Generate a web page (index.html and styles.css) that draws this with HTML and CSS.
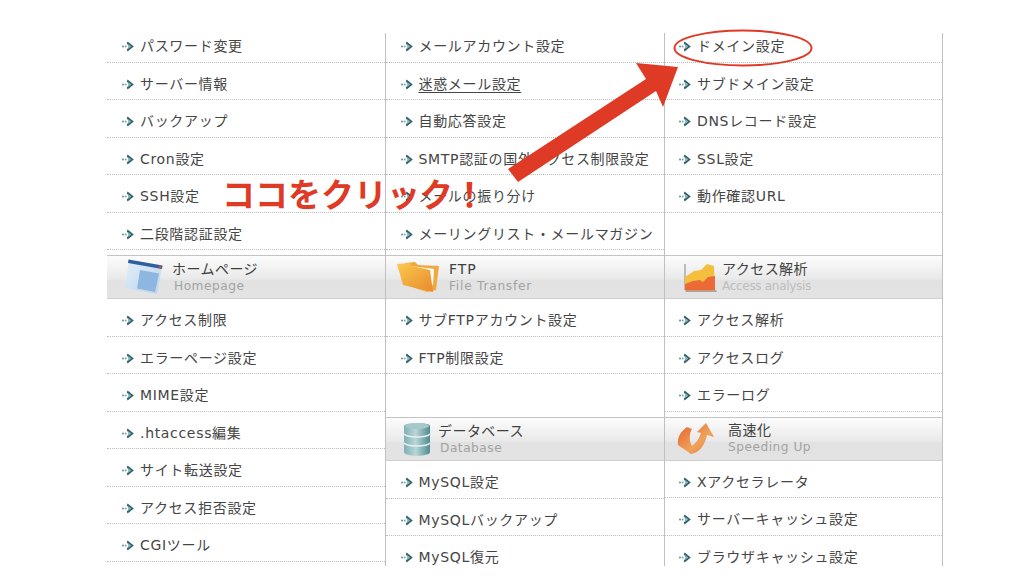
FILE: index.html
```html
<!DOCTYPE html>
<html lang="ja">
<head>
<meta charset="utf-8">
<title>サーバー設定</title>
<link rel="stylesheet" href="styles.css">
</head>
<body>
<svg class="defs" width="0" height="0" aria-hidden="true">
  <symbol id="bullet" viewBox="0 0 12 11">
    <circle cx="1" cy="5.5" r="1" fill="#5f8f96"/>
    <circle cx="3.7" cy="5.5" r="1" fill="#7fa6ac"/>
    <path d="M5.6 .4 11.8 5.5 5.6 10.6 4.8 8.4 7.4 5.5 4.8 2.6Z" fill="#2f5f68"/>
    <path d="M6.2 3 9.4 5.5 6.2 8Z" fill="#86b2b7"/>
  </symbol>
</svg>
<main class="menu">
  <section class="col">
    <div class="row"><svg class="bullet"><use href="#bullet"/></svg>パスワード変更</div>
    <div class="row"><svg class="bullet"><use href="#bullet"/></svg>サーバー情報</div>
    <div class="row"><svg class="bullet"><use href="#bullet"/></svg>バックアップ</div>
    <div class="row"><svg class="bullet"><use href="#bullet"/></svg>Cron設定</div>
    <div class="row"><svg class="bullet"><use href="#bullet"/></svg>SSH設定</div>
    <div class="row"><svg class="bullet"><use href="#bullet"/></svg>二段階認証設定</div>
    <div class="spacer spacer-small"></div>
    <header class="head head-home">
      <svg class="head-icon" width="40" height="36" viewBox="0 0 40 36">
        <defs><linearGradient id="win" x1="0" y1="0" x2="1" y2="1"><stop offset="0" stop-color="#e3eff9"/><stop offset="1" stop-color="#b9d3ec"/></linearGradient></defs>
        <path d="M5 1 38 7 33 35 1 29Z" fill="url(#win)"/>
        <path d="M4.5 .5 38.5 6.5 38 10 4 4Z" fill="#2f5f9f"/>
        <circle cx="36" cy="8" r="1.5" fill="#c8503c"/>
        <path d="M16 11 35 14.5 31 33 13 29.5Z" fill="#8db6e0"/>
      </svg>
      <div class="head-text"><span class="title">ホームページ</span><span class="sub">Homepage</span></div>
    </header>
    <div class="row"><svg class="bullet"><use href="#bullet"/></svg>アクセス制限</div>
    <div class="row"><svg class="bullet"><use href="#bullet"/></svg>エラーページ設定</div>
    <div class="row"><svg class="bullet"><use href="#bullet"/></svg>MIME設定</div>
    <div class="row"><svg class="bullet"><use href="#bullet"/></svg>.htaccess編集</div>
    <div class="row"><svg class="bullet"><use href="#bullet"/></svg>サイト転送設定</div>
    <div class="row"><svg class="bullet"><use href="#bullet"/></svg>アクセス拒否設定</div>
    <div class="row"><svg class="bullet"><use href="#bullet"/></svg>CGIツール</div>
  </section>
  <section class="col col-mid">
    <div class="row"><svg class="bullet"><use href="#bullet"/></svg>メールアカウント設定</div>
    <div class="row"><svg class="bullet"><use href="#bullet"/></svg><span class="link">迷惑メール設定</span></div>
    <div class="row"><svg class="bullet"><use href="#bullet"/></svg>自動応答設定</div>
    <div class="row"><svg class="bullet"><use href="#bullet"/></svg>SMTP認証の国外アクセス制限設定</div>
    <div class="row"><svg class="bullet"><use href="#bullet"/></svg>メールの振り分け</div>
    <div class="row"><svg class="bullet"><use href="#bullet"/></svg>メーリングリスト・メールマガジン</div>
    <div class="spacer spacer-small"></div>
    <header class="head head-ftp">
      <svg class="head-icon" width="44" height="32" viewBox="0 0 44 32">
        <defs><linearGradient id="fold" x1="0" y1="0" x2="1" y2="1"><stop offset="0" stop-color="#fbc94f"/><stop offset="1" stop-color="#e98a2c"/></linearGradient></defs>
        <path d="M8 2 18 1 21 4 42 5 39 29 30 31 9 24Z" fill="#efa93c"/>
        <path d="M13 5 37 8 36 24 14 20Z" fill="#fff"/>
        <path d="M0 3 13 2 15 5 33 9 36 31 6 24Z" fill="url(#fold)"/>
      </svg>
      <div class="head-text"><span class="title title-latin">FTP</span><span class="sub sub-wide">File Transfer</span></div>
    </header>
    <div class="row"><svg class="bullet"><use href="#bullet"/></svg>サブFTPアカウント設定</div>
    <div class="row"><svg class="bullet"><use href="#bullet"/></svg>FTP制限設定</div>
    <div class="spacer spacer-large"></div>
    <header class="head head-db">
      <svg class="head-icon" width="28" height="34" viewBox="0 0 28 34">
        <defs><linearGradient id="cyl" x1="0" y1="0" x2="1" y2="0"><stop offset="0" stop-color="#7fb0b4"/><stop offset=".45" stop-color="#b9d6d6"/><stop offset="1" stop-color="#4f8a92"/></linearGradient></defs>
        <path d="M1 4C1 0 27 0 27 4V30C27 35 1 35 1 30Z" fill="url(#cyl)"/>
        <ellipse cx="14" cy="4" rx="12" ry="3" fill="#a5c9cb"/>
        <path d="M1 12C5 16 23 16 27 12M1 21C5 25 23 25 27 21" fill="none" stroke="#e6f0f0" stroke-width="1.4"/>
      </svg>
      <div class="head-text"><span class="title">データベース</span><span class="sub">Database</span></div>
    </header>
    <div class="row"><svg class="bullet"><use href="#bullet"/></svg>MySQL設定</div>
    <div class="row"><svg class="bullet"><use href="#bullet"/></svg>MySQLバックアップ</div>
    <div class="row"><svg class="bullet"><use href="#bullet"/></svg>MySQL復元</div>
  </section>
  <section class="col col-last">
    <div class="row"><svg class="bullet"><use href="#bullet"/></svg>ドメイン設定</div>
    <div class="row"><svg class="bullet"><use href="#bullet"/></svg>サブドメイン設定</div>
    <div class="row"><svg class="bullet"><use href="#bullet"/></svg>DNSレコード設定</div>
    <div class="row"><svg class="bullet"><use href="#bullet"/></svg>SSL設定</div>
    <div class="row"><svg class="bullet"><use href="#bullet"/></svg>動作確認URL</div>
    <div class="spacer spacer-blank"></div>
    <header class="head head-access">
      <svg class="head-icon" width="35" height="31" viewBox="0 0 35 31">
        <path d="M2 2V28" stroke="#aaa" stroke-width="1.5"/>
        <path d="M2 15 11 9 18 8 24 2 31 4 32 28 2 28Z" fill="#f5bf3e"/>
        <path d="M2 22 10 19 17 18 20 20 25 15 32 14 32 28 2 28Z" fill="#ec6a36"/>
        <path d="M2 28H33L34 30H3Z" fill="#b9a08c"/>
      </svg>
      <div class="head-text"><span class="title">アクセス解析</span><span class="sub sub-narrow">Access analysis</span></div>
    </header>
    <div class="row"><svg class="bullet"><use href="#bullet"/></svg>アクセス解析</div>
    <div class="row"><svg class="bullet"><use href="#bullet"/></svg>アクセスログ</div>
    <div class="row"><svg class="bullet"><use href="#bullet"/></svg>エラーログ</div>
    <div class="spacer spacer-small"></div>
    <header class="head head-speed">
      <svg class="head-icon" width="38" height="32" viewBox="0 0 38 32">
        <defs><linearGradient id="spd" x1="0" y1="0" x2="1" y2="1"><stop offset="0" stop-color="#e5602e"/><stop offset=".6" stop-color="#f0a25c"/><stop offset="1" stop-color="#e5702f"/></linearGradient></defs>
        <path d="M10 4C3 9 0 15 1 22L14 31C22 30 28 22 30 12L37 14 29 0 20 9 24 10C22 16 19 20 15 23 12 18 12 11 15 6Z" fill="url(#spd)"/>
      </svg>
      <div class="head-text"><span class="title">高速化</span><span class="sub">Speeding Up</span></div>
    </header>
    <div class="row"><svg class="bullet"><use href="#bullet"/></svg>Xアクセラレータ</div>
    <div class="row"><svg class="bullet"><use href="#bullet"/></svg>サーバーキャッシュ設定</div>
    <div class="row"><svg class="bullet"><use href="#bullet"/></svg>ブラウザキャッシュ設定</div>
  </section>
</main>
<div class="callout">ココをクリック！</div>
<svg class="marks" width="1024" height="576" viewBox="0 0 1024 576" aria-hidden="true">
  <ellipse cx="743" cy="48" rx="68.5" ry="17.5" fill="none" stroke="#df3a25" stroke-width="2"/>
  <path d="M508 169 646 79 636 63 678 67 663 107 656 91 518 182Z" fill="#df3a25"/>
</svg>
</body>
</html>
```
FILE: styles.css
```css
html, body {
  margin: 0;
  height: 100%;
  background: #fff;
  overflow: hidden;
}

body {
  font-family: "DejaVu Sans", "Noto Sans CJK JP", sans-serif;
  color: #454545;
  font-size: 14px;
  letter-spacing: 0.68px;
}

.defs {
  display: block;
  height: 0;
}

.menu {
  display: grid;
  grid-template-columns: 279px 279px 278px;
  height: 533px;
  margin: 33px 0 0 107px;
  width: 836px;
  overflow: hidden;
}

.col {
  display: flex;
  flex-direction: column;
  border-right: 1px solid #c0c0c0;
  min-width: 0;
  overflow: hidden;
}

.row {
  flex: none;
  box-sizing: border-box;
  height: 37.5px;
  display: flex;
  align-items: center;
  gap: 6px;
  padding: 4px 0 0 15px;
  border-bottom: 1px dotted #bdbdbd;
  white-space: nowrap;
}

.row:first-child {
  height: 29.5px;
  padding: 0 0 4.5px 15px;
}

.col-mid .row {
  padding-left: 14.5px;
}

.col-last .row {
  padding-left: 14px;
}

.bullet {
  flex: none;
  width: 12px;
  height: 11px;
  margin-top: 3px;
}

.link {
  text-decoration: underline;
  text-underline-offset: 3px;
}

.spacer { flex: none; }
.spacer-small { height: 5px; }
.spacer-large { height: 43px; }
.spacer-blank { height: 42.5px; }

.head {
  flex: none;
  box-sizing: border-box;
  height: 44px;
  display: flex;
  align-items: center;
  border-top: 1px solid #c4c4c4;
  border-bottom: 1px solid #cfcfcf;
  background: linear-gradient(#fcfcfc 0, #e9e9e9 55%, #e2e2e2 58%, #e3e3e3 100%);
  overflow: hidden;
}

.head-icon {
  flex: none;
}

.head-text {
  display: flex;
  flex-direction: column;
  line-height: 16px;
}

.title {
  font-size: 14px;
  color: #404040;
  letter-spacing: 0.45px;
}

.title-latin {
  letter-spacing: 0.9px;
}

.sub {
  font-size: 12.2px;
  color: #a2a2a2;
  letter-spacing: 0.5px;
  margin-top: 1px;
}

.sub-wide {
  letter-spacing: 0.75px;
}

.sub-narrow {
  font-size: 12px;
  color: #bdbdbd;
  letter-spacing: -0.3px;
}

.head-home { padding-left: 17px; gap: 8px; }
.head-home .sub { margin-left: 2px; }
.head-ftp { padding-left: 11px; gap: 8px; }
.head-db { padding-left: 17px; gap: 7px; }
.head-db .sub { margin-left: 2px; }
.head-access { padding-left: 18px; gap: 4px; }
.head-speed { padding-left: 12px; gap: 13px; }

.callout {
  position: absolute;
  left: 222px;
  top: 171px;
  font-family: "Noto Sans CJK JP", sans-serif;
  font-weight: 700;
  font-size: 33px;
  line-height: 44px;
  letter-spacing: 0;
  color: #df3a25;
  white-space: nowrap;
}

.marks {
  position: absolute;
  left: 0;
  top: 0;
}
```
